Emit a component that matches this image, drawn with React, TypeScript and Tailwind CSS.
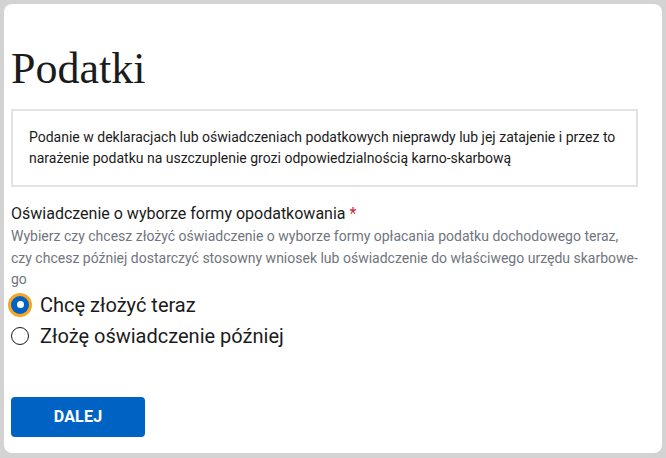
export default function App() {
  return (
    <div className="h-[458px] w-[666px] bg-[#d3d3d3] p-[4px] font-['Roboto',sans-serif] text-[#1b1b1b]">
      <div className="h-[449px] w-[658px] rounded-[8px] bg-white pl-[7px] pt-[38px]">
        {/* Title */}
        <h1 className="font-['Liberation_Serif',serif] text-[44px] leading-[53px] text-[#1b1b1b]">
          Podatki
        </h1>

        {/* Info box */}
        <div className="mt-[14px] w-[627px] border-2 border-[#e2e2e2] px-[16px] py-[16px] text-[14px] leading-[21px]">
          Podanie w deklaracjach lub oświadczeniach podatkowych nieprawdy lub jej zatajenie i przez to
          narażenie podatku na uszczuplenie grozi odpowiedzialnością karno-skarbową
        </div>

        {/* Question */}
        <div className="mt-[15px] w-[628px]">
          <div className="text-[16px] leading-[24px]">
            Oświadczenie o wyborze formy opodatkowania <span className="text-[#d4213d]">*</span>
          </div>
          <p className="text-[14px] leading-[21.5px] text-[#70757d]">
            Wybierz czy chcesz złożyć oświadczenie o wyborze formy opłacania podatku dochodowego teraz,{' '}
            <br />
            czy chcesz później dostarczyć stosowny wniosek lub oświadczenie do właściwego urzędu skarbowe{'\u00AD'}go
          </p>

          <div className="mt-[-2px] flex flex-col">
            <label className="flex h-8 items-center gap-[11px] text-[20px]">
              <span className="flex h-[18px] w-[18px] items-center justify-center rounded-full bg-[#0063c4] shadow-[0_0_0_3px_#f5a623]">
                <span className="h-[7px] w-[7px] rounded-full bg-white" />
              </span>
              Chcę złożyć teraz
            </label>
            <label className="flex h-[31px] items-center gap-[11px] text-[20px]">
              <span className="h-[18px] w-[18px] rounded-full border-[1.5px] border-[#1b1b1b] bg-white" />
              Złożę oświadczenie później
            </label>
          </div>
        </div>

        {/* Button */}
        <button className="mt-[45px] flex h-[40px] w-[134px] items-center justify-center rounded-[4px] bg-[#0063c4] text-[16px] font-bold tracking-[0.2px] text-white">
          DALEJ
        </button>
      </div>
    </div>
  )
}
